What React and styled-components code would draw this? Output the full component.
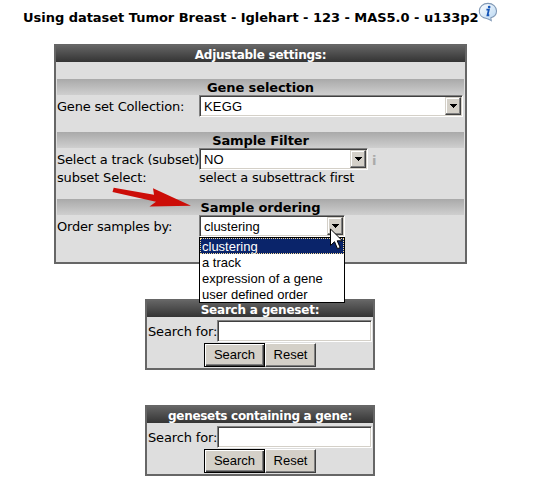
import React from "react";
import styled, { createGlobalStyle } from "styled-components";

const GlobalStyle = createGlobalStyle`
  * { box-sizing: border-box; }
  body {
    margin: 0;
    background: #fff;
    color: #000;
    font: 13px/16px Verdana, "DejaVu Sans", sans-serif;
  }
`;

const Page = styled.main`
  position: relative;
  width: 533px;
  height: 501px;
  overflow: hidden;
`;

const Title = styled.h1`
  display: flex;
  margin: 0;
  padding: 2px 0 0 23px;
  height: 44px;
  font-size: 13px;
  line-height: 31px;
  white-space: nowrap;
`;

const Text = styled.span`
  letter-spacing: ${(p) => p.$track || 0}px;
  white-space: nowrap;
`;

const Panel = styled.section`
  width: ${(p) => p.$width}px;
  height: ${(p) => p.$height}px;
  margin: 0 0 35px ${(p) => p.$left}px;
  border: 2px solid #666;
  background: #dedede;
`;

const PanelHeader = styled.h2`
  margin: 0;
  height: 16px;
  background: linear-gradient(#636363, #343434);
  color: #fff;
  font-size: 12px;
  line-height: 18px;
  text-align: center;
`;

const Section = styled.div`
  padding: ${(p) => p.$gap}px 1px 0;
`;

const SectionTitle = styled.h3`
  margin: 0;
  height: 16px;
  background: linear-gradient(#a9a9a9, #cfcfcf);
  font-size: 13px;
  line-height: 17px;
  text-align: center;
`;

const Row = styled.div`
  display: grid;
  grid-template-columns: 142px 1fr;
  height: ${(p) => p.$height || 22}px;
  line-height: ${(p) => (p.$height ? p.$height : 24)}px;
`;

const Cell = styled.div`
  display: flex;
  white-space: nowrap;
`;

const Select = styled.div`
  display: flex;
  justify-content: space-between;
  width: ${(p) => p.$width}px;
  height: 22px;
  border: 1px solid;
  border-color: #808080 #fff #fff #808080;
  background: #fff;
  box-shadow: inset 1px 1px #404040, inset -1px -1px #d4d0c8;
  padding: 2px 1px 1px 4px;
  font: 13px/17px Arial, "Liberation Sans", sans-serif;
`;

const DropButton = styled.span`
  display: flex;
  align-items: center;
  justify-content: center;
  width: 16px;
  height: 18px;
  margin-top: -1px;
  background: #d4d0c8;
  border: 1px solid;
  border-color: #d4d0c8 #404040 #404040 #d4d0c8;
  box-shadow: inset -1px -1px #808080, inset 1px 1px #fff;
`;

const Hint = styled.span`
  padding: 2px 0 0 4px;
  color: #aaa;
  font: bold 13px/22px "DejaVu Sans", sans-serif;
`;

const Menu = styled.ul`
  position: absolute;
  left: 199px;
  top: 237px;
  width: 146px;
  height: 66px;
  margin: 0;
  padding: 0;
  list-style: none;
  background: #fff;
  border: 1px solid #000;
  font: 13px/17px Arial, "Liberation Sans", sans-serif;
`;

const Option = styled.li`
  height: 16px;
  padding-left: 2px;
  background: ${(p) => (p.$active ? "#0a246a" : "#fff")};
  color: ${(p) => (p.$active ? "#fff" : "#000")};
  outline: ${(p) => (p.$active ? "1px dotted #f5db95" : "none")};
  outline-offset: -1px;
`;

const Arrow = styled.svg`
  position: absolute;
  left: 110px;
  top: 183px;
`;

const Cursor = styled.svg`
  position: absolute;
  left: 330px;
  top: 228px;
`;

const InfoIcon = styled.svg`
  margin: 0;
`;

const SearchLine = styled.label`
  display: flex;
  padding: 3px 1px 0;
  height: 25px;
  line-height: 23px;
`;

const Input = styled.input`
  width: 155px;
  min-width: 0;
  flex: none;
  margin: 0 0 0 auto;
  padding: 2px;
  height: 22px;
  border: 1px solid;
  border-color: #808080 #fff #fff #808080;
  border-radius: 0;
  background: #fff;
  box-shadow: inset 1px 1px #404040, inset -1px -1px #d4d0c8;
  outline: 0;
`;

const Buttons = styled.div`
  display: flex;
  padding: 1px 0 0 57px;
`;

const Button = styled.button`
  width: ${(p) => p.$width}px;
  height: 24px;
  padding: 0;
  border: 1px solid;
  border-color: ${(p) => (p.$primary ? "#000" : "#fff #404040 #404040 #fff")};
  border-radius: 0;
  background: #d4d0c8;
  box-shadow: ${(p) =>
    p.$primary
      ? "inset 1px 1px #fff, inset -1px -1px #404040, inset -2px -2px #808080"
      : "inset -1px -1px #808080"};
  color: #000;
  font: 13px/22px Arial, "Liberation Sans", sans-serif;
`;

function SelectBox({ width, track, children }) {
  return (
    <Select $width={width}>
      <Text $track={track}>{children}</Text>
      <DropButton>
        <svg width="7" height="4" shapeRendering="crispEdges">
          <path d="M0 0h7v1H6v1H5v1H4v1H3V3H2V2H1V1H0z" />
        </svg>
      </DropButton>
    </Select>
  );
}

function SearchPanel({ title, track }) {
  return (
    <Panel $width={230} $height={71} $left={145}>
      <PanelHeader><Text $track={track}>{title}</Text></PanelHeader>
      <SearchLine>
        <Text $track={-0.15}>Search for:</Text>
        <Input />
      </SearchLine>
      <Buttons>
        <Button $width={61} $primary>Search</Button>
        <Button $width={51}>Reset</Button>
      </Buttons>
    </Panel>
  );
}

export default function App() {
  return (
    <Page>
      <GlobalStyle />
      <Title>
        <Text $track={-0.03}>Using dataset Tumor Breast - Iglehart - 123 - MAS5.0 - u133p2</Text>
        <InfoIcon width="20" height="20" viewBox="0 0 19 19">
          <defs>
            <linearGradient id="bubble" x1="0" y1="0" x2="1" y2="1">
              <stop offset="0" stopColor="#fff" />
              <stop offset="1" stopColor="#b5d5f2" />
            </linearGradient>
          </defs>
          <path d="M9.5 1.3C4.8 1.3 1.2 4.5 1.2 8.6c0 3.8 3 6.5 7 7 1.6.2 2.8 1 4.4 2.1l-.4-2.7c3.5-1 5.4-3.5 5.4-6.4 0-4.1-3.5-7.3-8.1-7.3z" fill="url(#bubble)" stroke="#8098b5" />
          <circle cx="10.6" cy="4.8" r="1.3" fill="#1454b8" />
          <path d="M8 7.3h2.3L9 12.6h1.7" fill="none" stroke="#1454b8" strokeWidth="1.7" />
        </InfoIcon>
      </Title>

      <Panel $width={413} $height={220} $left={54}>
        <PanelHeader><Text $track={-0.25}>Adjustable settings:</Text></PanelHeader>
        <Section $gap={17}>
          <SectionTitle><Text $track={-0.1}>Gene selection</Text></SectionTitle>
          <Row>
            <Text $track={-0.2}>Gene set Collection:</Text>
            <Cell><SelectBox width={264} track={0.2}>KEGG</SelectBox></Cell>
          </Row>
        </Section>
        <Section $gap={15}>
          <SectionTitle><Text $track={-0.1}>Sample Filter</Text></SectionTitle>
          <Row>
            <Text $track={-0.21}>Select a track (subset)</Text>
            <Cell>
              <SelectBox width={169}>NO</SelectBox>
              <Hint>i</Hint>
            </Cell>
          </Row>
          <Row $height={16}>
            <Text $track={-0.17}>subset Select:</Text>
            <Text $track={-0.21}>select a subsettrack first</Text>
          </Row>
        </Section>
        <Section $gap={13}>
          <SectionTitle><Text $track={-0.12}>Sample ordering</Text></SectionTitle>
          <Row>
            <Text $track={-0.2}>Order samples by:</Text>
            <Cell><SelectBox width={146}>clustering</SelectBox></Cell>
          </Row>
        </Section>
      </Panel>

      <SearchPanel title="Search a geneset:" track={-0.2} />
      <SearchPanel title="genesets containing a gene:" track={-0.3} />

      <Menu>
        <Option $active>clustering</Option>
        <Option>a track</Option>
        <Option>expression of a gene</Option>
        <Option>user defined order</Option>
      </Menu>
      <Arrow width="82" height="26" viewBox="0 0 82 26">
        <path d="M3.7 4.7L44 11.7 43 5.3 81 22.7 39.5 23.5 46 18.8 2.5 9z" fill="#cc0d08" />
      </Arrow>
      <Cursor width="13" height="22" viewBox="0 0 13 22">
        <path d="M.5 1v16.5l4-3.8 3 7 2.7-1.2-3-6.7h5.2z" fill="#fff" stroke="#000" />
      </Cursor>
    </Page>
  );
}
